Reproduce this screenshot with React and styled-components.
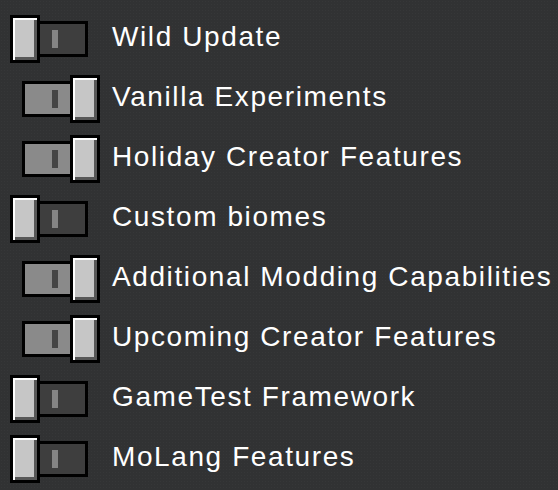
import React from "react";
import styled, { createGlobalStyle } from "styled-components";

const Global = createGlobalStyle`
  html, body {
    margin: 0;
    padding: 0;
    background: #313233;
  }
  body {
    width: 558px;
    height: 490px;
    overflow: hidden;
  }
`;

const Page = styled.div`
  box-sizing: border-box;
  width: 558px;
  height: 490px;
  padding-top: 9px;
  background-color: #313233;
  background-image: radial-gradient(rgba(255, 255, 255, 0.025) 0.6px, transparent 0.8px);
  background-size: 3px 3px;
  overflow: hidden;
`;

const Row = styled.div`
  display: grid;
  grid-template-columns: 112px 1fr;
  align-items: center;
  height: 60px;
`;

const ToggleCell = styled.div`
  display: flex;
  align-items: center;
  padding-left: ${(p) => (p.$on ? "22px" : "10px")};
`;

const Toggle = styled.div`
  display: flex;
  flex-direction: ${(p) => (p.$on ? "row-reverse" : "row")};
  align-items: center;
  width: 78px;
  height: 48px;
`;

const Knob = styled.div`
  position: relative;
  z-index: 1;
  box-sizing: border-box;
  width: 30px;
  height: 48px;
  border: 3px solid #000;
  background: #c6c6c6;
  box-shadow: inset 2px 2px 0 #ffffff, inset -3px -3px 0 #585858;
  flex: none;
`;

const Track = styled.div`
  box-sizing: border-box;
  width: 51px;
  height: 36px;
  border: 3px solid #000;
  background: ${(p) => (p.$on ? "#8a8a8a" : "#3e3e3e")};
  display: flex;
  align-items: center;
  justify-content: ${(p) => (p.$on ? "flex-end" : "flex-start")};
  padding: 0 12px;
  margin-left: ${(p) => (p.$on ? "0" : "-3px")};
  margin-right: ${(p) => (p.$on ? "-3px" : "0")};
  flex: none;
`;

const Pipe = styled.div`
  width: 6px;
  height: 18px;
  background: ${(p) => (p.$on ? "#454545" : "#858585")};
`;

const Label = styled.div`
  box-sizing: border-box;
  height: 60px;
  padding-bottom: 4px;
  line-height: 56px;
  font-family: "Liberation Sans", Arial, sans-serif;
  font-size: 28px;
  letter-spacing: 1.6px;
  color: #ffffff;
  white-space: nowrap;
`;

const items = [
  { label: "Wild Update", on: false },
  { label: "Vanilla Experiments", on: true },
  { label: "Holiday Creator Features", on: true },
  { label: "Custom biomes", on: false },
  { label: "Additional Modding Capabilities", on: true },
  { label: "Upcoming Creator Features", on: true },
  { label: "GameTest Framework", on: false },
  { label: "MoLang Features", on: false },
];

export default function App() {
  return (
    <>
      <Global />
      <Page>
        {items.map((it) => (
          <Row key={it.label}>
            <ToggleCell $on={it.on}>
              <Toggle $on={it.on}>
                <Knob />
                <Track $on={it.on}>
                  <Pipe $on={it.on} />
                </Track>
              </Toggle>
            </ToggleCell>
            <Label>{it.label}</Label>
          </Row>
        ))}
      </Page>
    </>
  );
}
